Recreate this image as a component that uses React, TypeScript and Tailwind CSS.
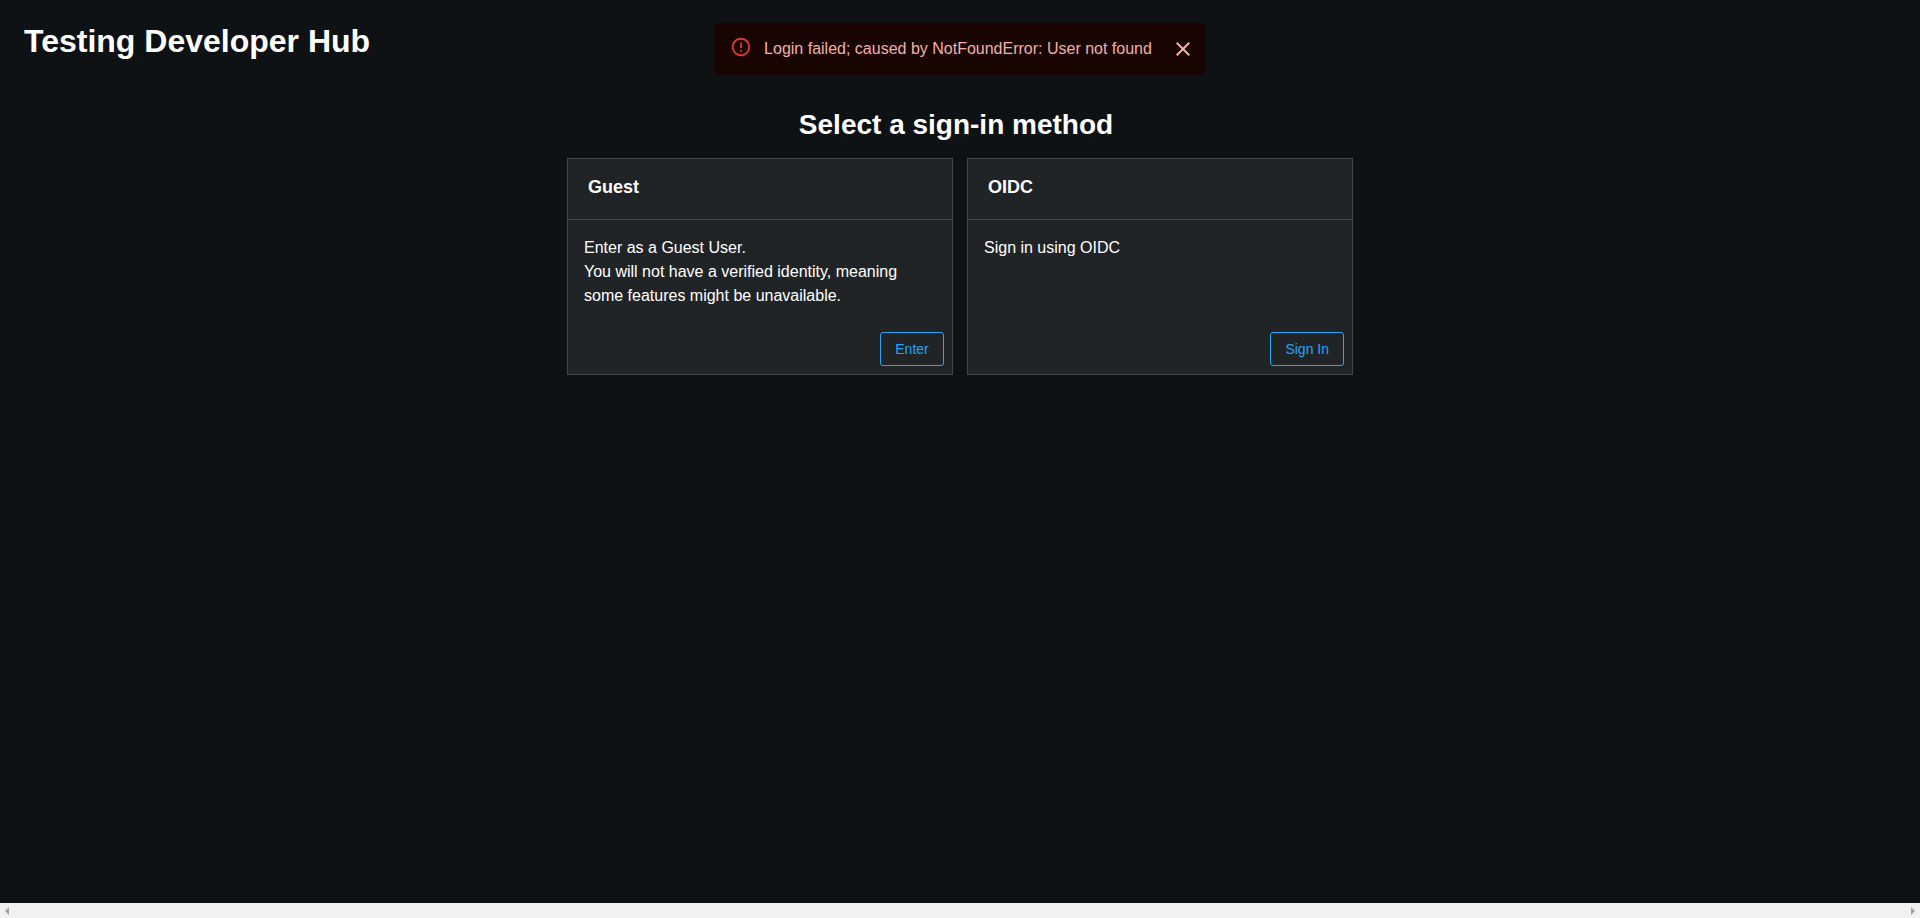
import type { ReactNode } from "react";

const providers = [
    {
        title: "Guest",
        content: (
            <>
                Enter as a Guest User.
                <br />
                You will not have a verified identity, meaning some features might be
                unavailable.
            </>
        ),
        action: "Enter",
    },
    {
        title: "OIDC",
        content: "Sign in using OIDC",
        action: "Sign In",
    },
];

function LoginAlert({ children }: { children: ReactNode }) {
    return (
        <div className="fixed top-[23px] inset-x-0 flex justify-center pointer-events-none">
            <div
                role="alert"
                className="flex items-start rounded pl-4 pr-[11px] py-1.5 bg-[#180502] text-[#f4b0aa] pointer-events-auto"
            >
                <svg
                    viewBox="0 0 24 24"
                    className="w-[22px] h-[22px] my-[7px] mr-3 fill-[#e0382d]"
                    aria-hidden="true"
                >
                    <path d="M11 15h2v2h-2zm0-8h2v6h-2zm.99-5C6.47 2 2 6.48 2 12s4.47 10 9.99 10C17.52 22 22 17.52 22 12S17.52 2 11.99 2zM12 20c-4.42 0-8-3.58-8-8s3.58-8 8-8 8 3.58 8 8-3.58 8-8 8z" />
                </svg>
                <span className="py-2 whitespace-nowrap">{children}</span>
                <button type="button" aria-label="Close" className="py-2 ml-[19px]">
                    <svg viewBox="0 0 24 24" className="w-6 h-6 fill-current">
                        <path d="M19 6.41L17.59 5 12 10.59 6.41 5 5 6.41 10.59 12 5 17.59 6.41 19 12 13.41 17.59 19 19 17.59 13.41 12z" />
                    </svg>
                </button>
            </div>
        </div>
    );
}

function ScrollBar() {
    return (
        <div className="flex justify-between items-center h-[15px] px-1 bg-[#f1f1f1]">
            <button type="button" aria-label="Scroll left">
                <svg viewBox="0 0 6 8" className="w-1.5 h-2 fill-[#a3a3a3]">
                    <path d="M5 0v8L1 4z" />
                </svg>
            </button>
            <button type="button" aria-label="Scroll right">
                <svg viewBox="0 0 6 8" className="w-1.5 h-2 fill-[#a3a3a3]">
                    <path d="M1 0v8l4-4z" />
                </svg>
            </button>
        </div>
    );
}

export default function App() {
    return (
        <div className="min-h-screen flex flex-col bg-[#0f1214] text-white text-base font-['Liberation_Sans',Arial,sans-serif]">
            <header className="px-6 pt-[21px] pb-5">
                <h1 className="text-[32px] leading-10 font-bold">
                    Testing Developer Hub
                </h1>
            </header>

            <LoginAlert>
                Login failed; caused by NotFoundError: User not found
            </LoginAlert>

            <main className="flex-1 flex flex-col items-center pt-6 px-6">
                <h2 className="text-[28px] leading-10 font-bold mb-[13px] pr-2">
                    Select a sign-in method
                </h2>
                <ul className="w-full max-w-[786px] grid grid-cols-2 gap-3.5">
                    {providers.map((item) => (
                        <li
                            key={item.title}
                            className="flex flex-col bg-[#212427] border border-[#444548]"
                        >
                            <h3 className="px-5 pt-4 pb-5 text-lg leading-6 font-bold border-b border-[#444548]">
                                {item.title}
                            </h3>
                            <p className="flex-1 p-4">{item.content}</p>
                            <div className="flex justify-end p-2">
                                <button
                                    type="button"
                                    className="h-[34px] min-w-16 px-3.5 text-sm text-[#1fa7f8] border border-[#1fa7f8] rounded-[3px]"
                                >
                                    {item.action}
                                </button>
                            </div>
                        </li>
                    ))}
                </ul>
            </main>

            <ScrollBar />
        </div>
    );
}
